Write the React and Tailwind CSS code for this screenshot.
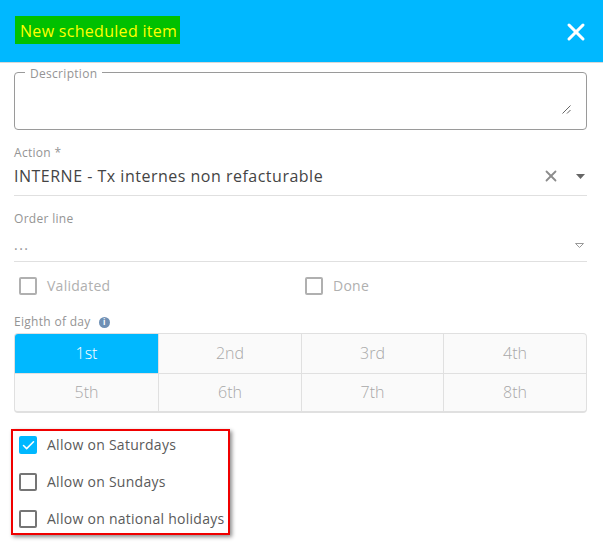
import { X, Check } from 'lucide-react'

const eighths = ['1st', '2nd', '3rd', '4th', '5th', '6th', '7th', '8th']

function Box({ checked, disabled }) {
  if (checked) {
    return (
      <span className="flex h-[18px] w-[18px] items-center justify-center rounded-[2px] bg-[#00b8ff]">
        <Check size={15} strokeWidth={2.5} className="text-white" />
      </span>
    )
  }
  return (
    <span
      className={`block h-[18px] w-[18px] rounded-[2px] border-2 ${
        disabled ? 'border-[#b0b0b0]' : 'border-[#757575]'
      }`}
    />
  )
}

function CheckRow({ label, checked, disabled, className }) {
  return (
    <div className={`flex h-[18px] items-center gap-[10px] ${className || ''}`}>
      <Box checked={checked} disabled={disabled} />
      <span className={`pb-[2px] text-[14px] tracking-[0.27px] ${disabled ? 'text-[#b0b0b0]' : 'text-[#5a5a5a]'}`}>
        {label}
      </span>
    </div>
  )
}

export default function App() {
  return (
    <div className="h-[548px] w-[603px] overflow-hidden bg-white font-['Open_Sans',sans-serif]">
      <header className="flex h-[63px] items-center justify-between border-b border-[#d8d8d8] bg-[#00b8ff] pl-[15px] pr-[13px]">
        <h1 className="-mt-[2px] flex h-[28px] items-center bg-[#00c000] pl-[5px] pr-[3px] pt-[2px] text-[16px] font-normal tracking-[0.3px] text-[#ffff00]">
          New scheduled item
        </h1>
        <X size={28} strokeWidth={2.6} className="mt-[2px] text-white" />
      </header>

      <main className="pl-[14px] pr-[16px]">
        <fieldset className="relative mt-[1px] h-[66px] rounded-[4px] border border-[#9a9a9a] pl-[10px]">
          <legend className="px-[5px] pt-[4px] text-[12px] leading-[12px] tracking-[0.3px] text-[#949494]">
            Description
          </legend>
          <svg className="absolute bottom-[15px] right-[15px]" width="9" height="9" viewBox="0 0 9 9">
            <path d="M0.5 8.5 L8.5 0.5 M5 8.5 L8.5 5" stroke="#666" strokeWidth="1" fill="none" />
          </svg>
        </fieldset>

        <div className="mt-[15px] h-[51px] border-b border-[#e0e0e0]">
          <div className="text-[12px] leading-[16px] tracking-[0.3px] text-[#949494]">Action *</div>
          <div className="mt-[4px] flex items-center justify-between">
            <span className="text-[16px] leading-[22px] tracking-[0.5px] text-[#444]">
              INTERNE - Tx internes non refacturable
            </span>
            <div className="flex items-center gap-[14px] pr-[2px]">
              <X size={18} strokeWidth={2.4} className="-mx-[3px] text-[#8c8c8c]" />
              <svg className="ml-[5px]" width="9" height="5" viewBox="0 0 9 5">
                <path d="M0 0 H9 L4.5 5 Z" fill="#666" />
              </svg>
            </div>
          </div>
        </div>

        <div className="mt-[15px] h-[51px] border-b border-[#e0e0e0]">
          <div className="text-[12px] leading-[16px] tracking-[0.3px] text-[#949494]">Order line</div>
          <div className="mt-[7px] flex items-center justify-between">
            <span className="text-[14px] leading-[22px] tracking-[1.5px] text-[#949494]">...</span>
            <svg className="mr-[3px]" width="9" height="5" viewBox="0 0 9 5">
              <path d="M0.5 0.5 H8.5 L4.5 4.5 Z" fill="none" stroke="#999" />
            </svg>
          </div>
        </div>

        <div className="mt-[15px] flex pl-[5px]">
          <CheckRow label="Validated" disabled className="w-[286px]" />
          <CheckRow label="Done" disabled />
        </div>

        <div className="mt-[18px] flex h-[18px] items-center gap-[8px] text-[12px] tracking-[0.3px] text-[#949494]">
          Eighth of day
          <span className="flex h-[11px] w-[11px] items-center justify-center rounded-full bg-[#6f90b5] text-[8px] font-bold leading-none tracking-normal text-white">
            i
          </span>
        </div>

        <div className="mt-[2px] grid h-[80px] grid-cols-[144px_143px_142px_142px] grid-rows-[40px_1fr] overflow-hidden rounded-[4px] border border-b-2 border-[#e0e0e0] bg-[#fafafa]">
          {eighths.map((e, i) => (
            <div
              key={e}
              className={`flex items-center justify-center pb-[2px] text-[16px] font-light ${
                i === 0 ? 'bg-[#00b8ff] text-white' : 'text-[#a8a8a8]'
              } ${i < 4 ? 'border-b border-[#e0e0e0]' : ''} ${i % 4 !== 3 ? 'border-r border-[#e0e0e0]' : ''}`}
            >
              {e}
            </div>
          ))}
        </div>

        <div className="-ml-[3px] mt-[16px] flex h-[106px] w-[219px] flex-col gap-[19px] border-2 border-[#f00000] pl-[6px] pt-[5px] shadow-[2px_2px_4px_rgba(0,0,0,0.45)]">
          <CheckRow label="Allow on Saturdays" checked />
          <CheckRow label="Allow on Sundays" />
          <CheckRow label="Allow on national holidays" />
        </div>
      </main>
    </div>
  )
}
